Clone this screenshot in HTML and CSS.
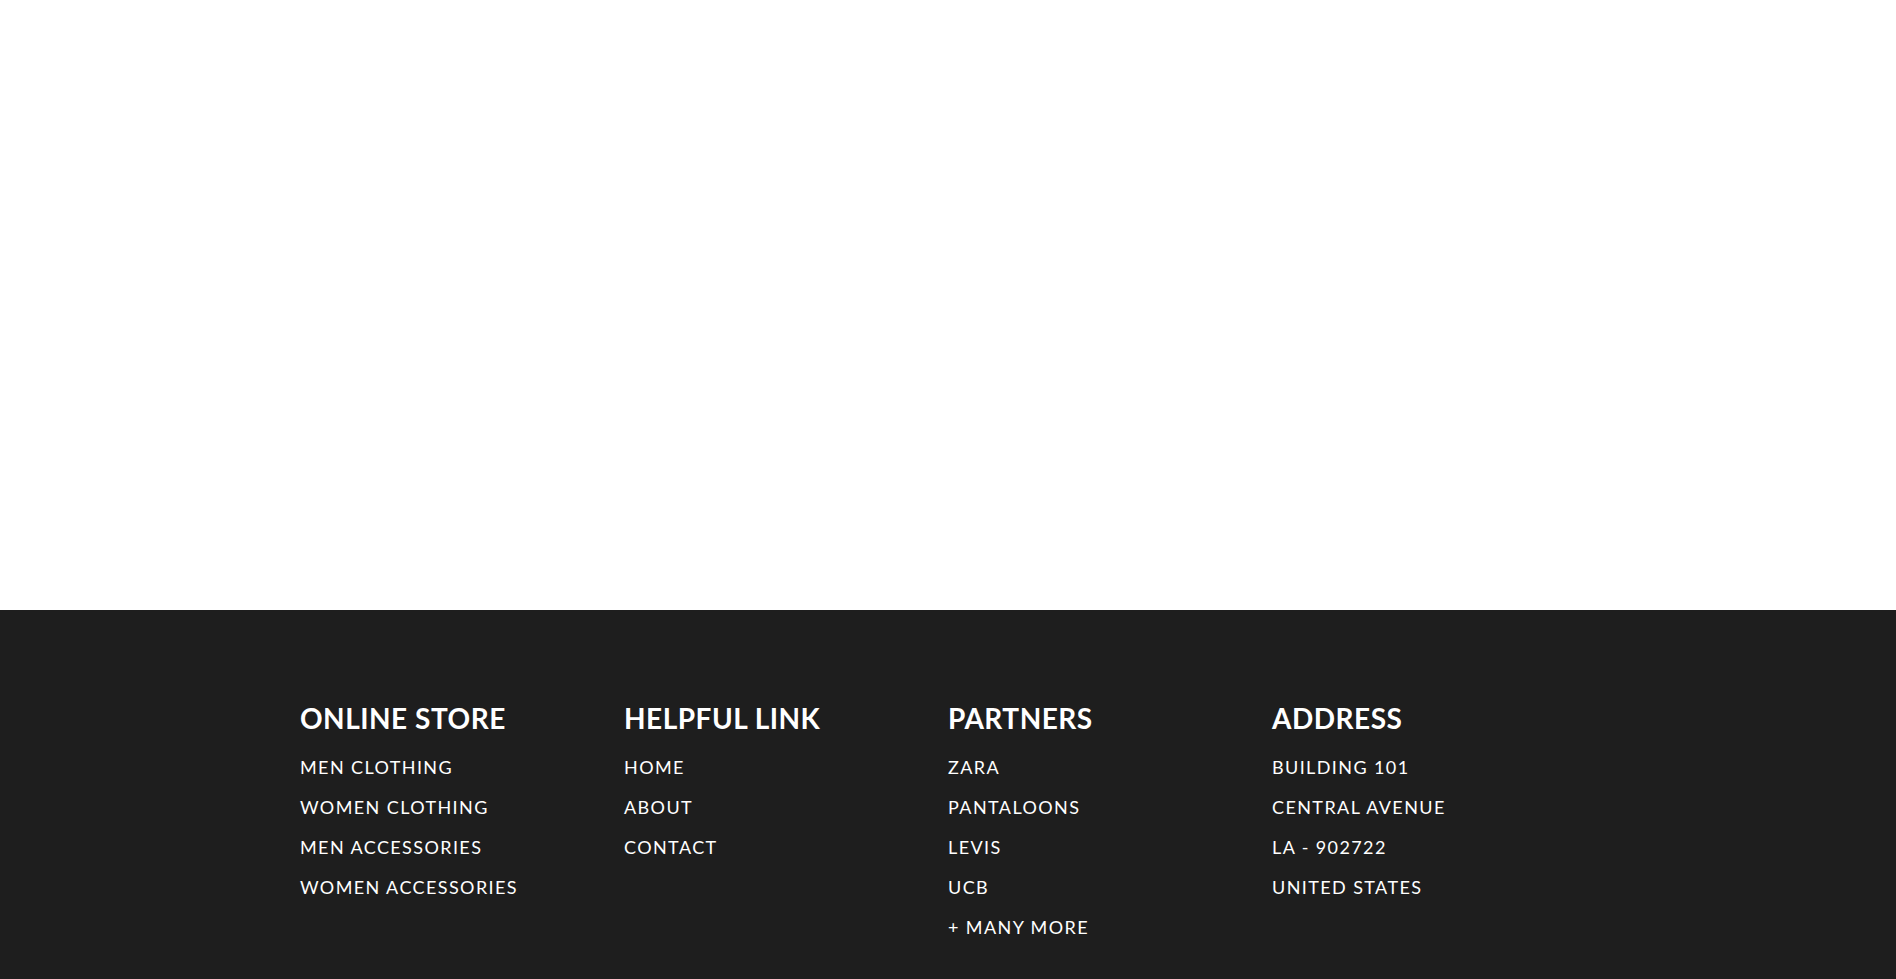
FILE: index.html
```html
<!DOCTYPE html>
<html lang="en">
<head>
<meta charset="utf-8">
<title>Store</title>
<link rel="stylesheet" href="styles.css">
</head>
<body>
<main class="page-body"></main>
<footer class="footer">
  <div class="footer-inner">
    <div class="footer-col">
      <h3 class="footer-title">ONLINE STORE</h3>
      <ul class="footer-list">
        <li>MEN CLOTHING</li>
        <li>WOMEN CLOTHING</li>
        <li>MEN ACCESSORIES</li>
        <li>WOMEN ACCESSORIES</li>
      </ul>
    </div>
    <div class="footer-col">
      <h3 class="footer-title">HELPFUL LINK</h3>
      <ul class="footer-list">
        <li>HOME</li>
        <li>ABOUT</li>
        <li>CONTACT</li>
      </ul>
    </div>
    <div class="footer-col">
      <h3 class="footer-title">PARTNERS</h3>
      <ul class="footer-list">
        <li>ZARA</li>
        <li>PANTALOONS</li>
        <li>LEVIS</li>
        <li>UCB</li>
        <li>+ MANY MORE</li>
      </ul>
    </div>
    <div class="footer-col">
      <h3 class="footer-title">ADDRESS</h3>
      <ul class="footer-list">
        <li>BUILDING 101</li>
        <li>CENTRAL AVENUE</li>
        <li>LA - 902722</li>
        <li>UNITED STATES</li>
      </ul>
    </div>
  </div>
</footer>
</body>
</html>
```
FILE: styles.css
```css
* { box-sizing: border-box; }
html, body { margin: 0; padding: 0; }
body {
  font-family: Lato, "Open Sans", sans-serif;
  background: #ffffff;
}
.page-body {
  height: 610px;
  background: #ffffff;
}
.footer {
  background: #1e1e1e;
  color: #ffffff;
  padding: 91px 0 60px;
}
.footer-inner {
  width: 1296px;
  margin: 0 auto;
  display: grid;
  grid-template-columns: repeat(4, 1fr);
}
.footer-title {
  margin: 0 0 12px;
  font-size: 28px;
  font-weight: 700;
  line-height: 34px;
  letter-spacing: 0.5px;
}
.footer-list {
  list-style: none;
  margin: 0;
  padding: 0;
}
.footer-list li {
  font-size: 18px;
  line-height: 40px;
  letter-spacing: 1.4px;
}
```
